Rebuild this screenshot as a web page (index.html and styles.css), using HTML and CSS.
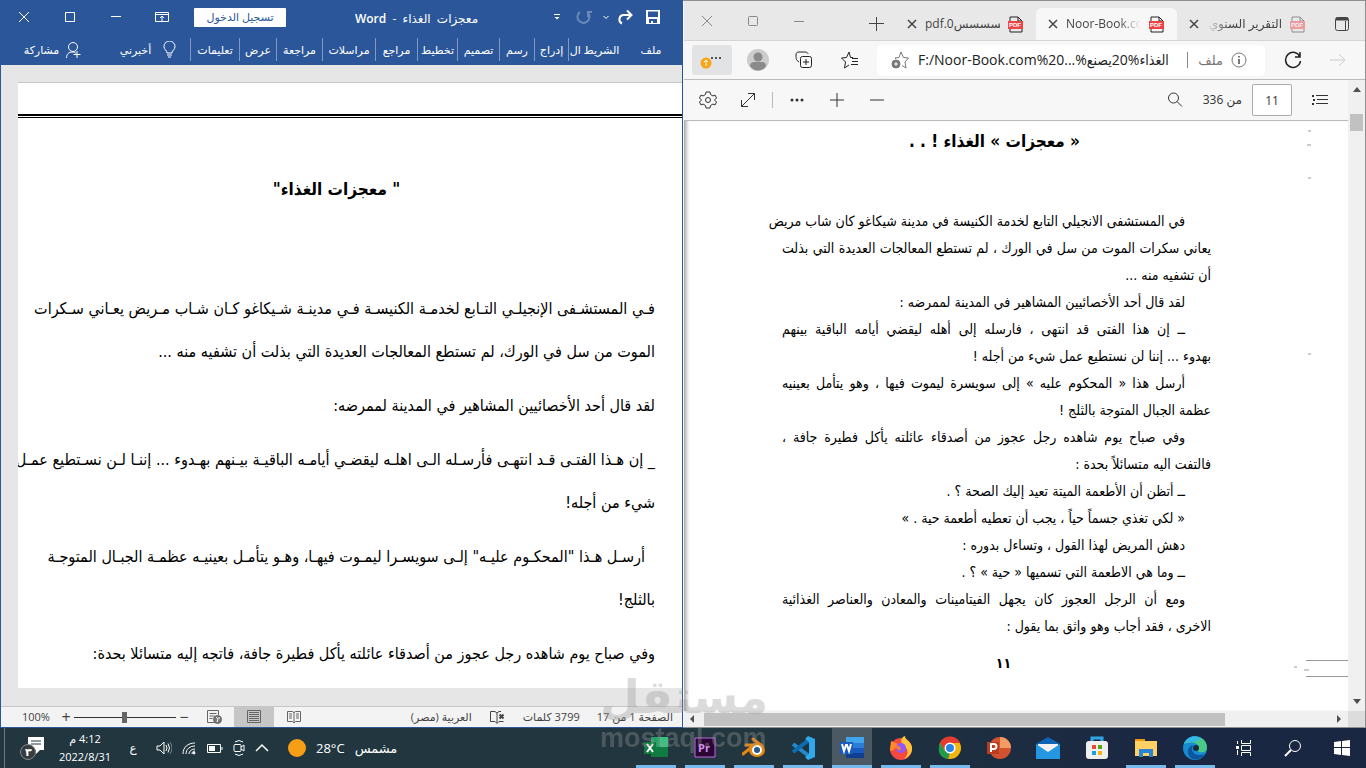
FILE: index.html
```html
<!DOCTYPE html>
<html lang="ar">
<head>
<meta charset="utf-8">
<title>Word - معجزات الغذاء</title>
<link rel="stylesheet" href="styles.css">
</head>
<body>
<main class="desktop">
<section class="word">
  <header class="word-title">
    <div class="controls">
      <button aria-label="إغلاق"><svg width="12" height="12" viewBox="0 0 12 12"><path d="M1 1l10 10M11 1L1 11"/></svg></button>
      <button aria-label="تكبير"><svg width="12" height="12" viewBox="0 0 12 12"><path d="M1.5 1.5h9v9h-9z"/></svg></button>
      <button aria-label="تصغير"><svg width="12" height="12" viewBox="0 0 12 12"><path d="M1 5.500h10"/></svg></button>
      <button aria-label="خيارات عرض الشريط"><svg width="14" height="12" viewBox="0 0 14 12"><path d="M.5 1.500h13v9H.5zM.5 3.500h13M7 10V5M5 7l2-2 2 2"/></svg></button>
    </div>
    <button class="signin">تسجيل الدخول</button>
    <h1 dir="rtl">معجزات&nbsp; الغذاء&nbsp; -&nbsp; <b>Word</b></h1>
    <div class="quick">
      <button aria-label="تخصيص"><svg width="8" height="8" viewBox="0 0 8 8"><path d="M1 1.500h6"/><path class="solid" d="M1.500 4h5L4 6.500z"/></svg></button>
      <button class="dim" aria-label="تكرار"><svg width="16" height="16" viewBox="0 0 16 16"><path d="M4 3a6 6 0 1 0 8 1M12 8V3h4" stroke-width="2"/></svg></button>
      <button aria-label="المزيد"><svg width="8" height="8" viewBox="0 0 8 8"><path d="M1.500 3L4 5.500 6.500 3"/></svg></button>
      <button aria-label="تراجع"><svg width="16" height="16" viewBox="0 0 16 16"><path d="M14 6H6a4.500 4.500 0 0 0-1 8.500M10 1.500L14.500 6 10 10.500" stroke-width="2"/></svg></button>
      <button aria-label="حفظ"><svg width="14" height="14" viewBox="0 0 14 14"><path class="solid" fill-rule="evenodd" d="M0 0h14v14H0zM2 1.500V7h10V1.500zM3 9v4h2v-2h2v2h4V9z"/></svg></button>
    </div>
  </header>
  <nav class="ribbon">
    <button class="share">مشاركة <svg width="18" height="18" viewBox="0 0 18 18"><path d="M1.500 17c0-4 2.500-6 5.500-6 2 0 3 .5 4 1.500"/><circle cx="8" cy="6" r="4.500"/><path d="M12 10v7M8.500 13.500h7"/></svg></button>
    <button class="tell">أخبرني <svg width="13" height="17" viewBox="0 0 13 17"><path d="M4 12c0-3-3-3-3-6.500a5 5 0 0 1 11 0C12 9 9 9 9 12zM4 14h5M5 16h3"/></svg></button>
    <button>تعليمات</button><button>عرض</button><button>مراجعة</button><button>مراسلات</button><button>مراجع</button><button>تخطيط</button><button>تصميم</button><button>رسم</button><button>إدراج</button><button class="home">الشريط ال</button><button class="file">ملف</button>
  </nav>
  <div class="canvas">
    <article class="sheet" dir="rtl">
      <h2>" معجزات الغذاء"</h2>
      <p><span>فـي المستشـفى الإنجيلـي التـابع لخدمـة الكنيسـة فـي مدينـة شـيكاغو كـان شـاب مـريض يعـاني سـكرات</span><span>الموت من سل في الورك، لم تستطع المعالجات العديدة التي بذلت أن تشفيه منه ...</span></p>
      <p><span>لقد قال أحد الأخصائيين المشاهير في المدينة لممرضه:</span></p>
      <p><span>_ إن هـذا الفتـى قـد انتهـى فأرسـله الـى اهلـه ليقضـي أيامـه الباقيـة بيـنهم بهـدوء ... إننـا لـن نسـتطيع عمـل</span><span>شيء من أجله!</span></p>
      <p><span class="inset">أرسـل هـذا "المحكـوم عليـه" إلـى سويسـرا ليمـوت فيهـا، وهـو يتأمـل بعينيـه عظمـة الجبـال المتوجـة</span><span>بالثلج!</span></p>
      <p><span>وفي صباح يوم شاهده رجل عجوز من أصدقاء عائلته يأكل فطيرة جافة، فاتجه إليه متسائلا بحدة:</span></p>
    </article>
  </div>
  <footer class="status">
    <label class="percent" for="zoom">100%</label>
    <button aria-label="تكبير العرض">+</button>
    <input id="zoom" type="range" min="0" max="100" value="49">
    <button aria-label="تصغير العرض">−</button>
    <button class="view" aria-label="تخطيط ويب"><svg width="15" height="14" viewBox="0 0 15 14"><path d="M8 12.500H.5v-12h11V5M2.500 3.500h7M2.500 6h5M2.500 8.500h3"/><circle class="fillgrey" cx="10.500" cy="9.500" r="4"/><path class="pale" d="M9 7l2 2-1 3M12 7v2"/></svg></button>
    <button class="view on" aria-label="تخطيط الطباعة"><svg width="14" height="14" viewBox="0 0 14 14"><path d="M.5.500h13v12H.5zM2 2.500h10M2 4.500h10M2 6.500h10M2 8.500h10M2 10.500h10"/></svg></button>
    <button class="view" aria-label="وضع القراءة"><svg width="14" height="14" viewBox="0 0 14 14"><path d="M.5 1.500h5L7 2.500l1.500-1h5v10h-5L7 13l-1.500-1.500h-5zM7 2v11M2 4h3M2 6h3M2 8h3M9 4h3M9 6h3M9 8h3"/></svg></button>
    <span class="lang" dir="rtl">العربية (مصر)</span>
    <svg class="proof" width="15" height="13" viewBox="0 0 15 13"><path d="M7 2L5 .5H.5v10H5l2 2 2-2h4.500M7 2v10M7 2L9 .5h2"/><path d="M9.500 3.500l4 4M13.500 3.500l-4 4" stroke-width="2"/></svg>
    <span class="words" dir="rtl">3799 كلمات</span>
    <span dir="rtl">الصفحة 1 من 17</span>
  </footer>
</section>

<section class="edge">
  <header class="strip">
    <div class="controls">
      <button aria-label="إغلاق"><svg width="12" height="12" viewBox="0 0 12 12"><path d="M1 1l10 10M11 1L1 11"/></svg></button>
      <button aria-label="تكبير"><svg width="12" height="12" viewBox="0 0 12 12"><rect x="1.500" y="1.500" width="9" height="9" rx="1"/></svg></button>
      <button aria-label="تصغير"><svg width="12" height="12" viewBox="0 0 12 12"><path d="M1 6.500h10"/></svg></button>
    </div>
    <button class="newtab" aria-label="علامة تبويب جديدة"><svg width="16" height="16" viewBox="0 0 16 16"><path d="M7.500 1v14M0 7.500h15"/></svg></button>
    <div class="tab"><button aria-label="إغلاق علامة التبويب"><svg width="10" height="10" viewBox="0 0 10 10"><path class="cross" d="M1 1l8 8M9 1L1 9"/></svg></button><span>pdf.0سسسسس</span><svg class="pdf" width="16" height="17" viewBox="0 0 16 17"><path d="M2 6V1h8l4 4v1M2 12v4h12v-4M10 1v4h4"/><path class="red" d="M0 5h15v8H0z"/><text x="1" y="11">PDF</text></svg></div>
    <div class="tab active"><button aria-label="إغلاق علامة التبويب"><svg width="10" height="10" viewBox="0 0 10 10"><path class="cross" d="M1 1l8 8M9 1L1 9"/></svg></button><span class="fade">Noor-Book.com</span><svg class="pdf" width="16" height="17" viewBox="0 0 16 17"><path d="M2 6V1h8l4 4v1M2 12v4h12v-4M10 1v4h4"/><path class="red" d="M0 5h15v8H0z"/><text x="1" y="11">PDF</text></svg></div>
    <div class="tab"><button aria-label="إغلاق علامة التبويب"><svg width="10" height="10" viewBox="0 0 10 10"><path class="cross" d="M1 1l8 8M9 1L1 9"/></svg></button><span class="fadeleft" dir="rtl">التقرير السنوي.pdf</span><svg class="pdf soft" width="16" height="17" viewBox="0 0 16 17"><path d="M2 6V1h8l4 4v1M2 12v4h12v-4M10 1v4h4"/><path class="red" d="M0 5h15v8H0z"/><text x="1" y="11">PDF</text></svg></div>
    <button class="actions" aria-label="إجراءات علامات التبويب"><svg width="16" height="16" viewBox="0 0 16 16"><rect x="1.500" y="1.500" width="13" height="13" rx="2"/><path d="M2 3h12" stroke-width="3"/><path d="M11.500 5v9"/></svg></button>
  </header>
  <div class="bar">
    <button class="more" aria-label="الإعدادات والمزيد"><svg width="24" height="22" viewBox="0 0 24 22"><g class="solid"><circle cx="12" cy="9" r="1"/><circle cx="16" cy="9" r="1"/><circle cx="20" cy="9" r="1"/></g><circle class="flat" cx="6" cy="14" r="5.500" fill="#f9a51a"/><path d="M6 17v-6M4 13l2-2 2 2" stroke="#fff"/></svg></button>
    <button aria-label="الملف الشخصي"><svg class="flat" width="22" height="22" viewBox="0 0 22 22"><circle cx="11" cy="11" r="11" fill="#ccc"/><circle cx="11" cy="8" r="4.500" fill="#8a8a8a"/><path d="M3 17c0-3 2-4 4-4h8c2 0 4 1 4 4-4 6-12 6-16 0z" fill="#8a8a8a"/></svg></button>
    <button aria-label="المجموعات"><svg width="18" height="18" viewBox="0 0 18 18"><path d="M4 11C1 9 1 8 1 4c0-2 1-3 3-3h6c2 0 3 1 3 2"/><rect x="5.500" y="5.500" width="11" height="11" rx="2"/><path d="M11 8v6M8 11h6"/></svg></button>
    <button aria-label="المفضلة"><svg width="18" height="18" viewBox="0 0 18 18"><path d="M12 6.500H9.500L8 1 5.500 6.500l-5 .5 4 4-1 6L8 14M11 7.500h6M11 10.500h6M10 13.500h7"/></svg></button>
    <div class="address">
      <svg class="grey" width="18" height="18" viewBox="0 0 18 18"><path d="M5 8l-1-1 4-.5L10 1l2.500 5.500 5 .5-3.500 4 1 6-4-2.500"/><circle class="fillgrey" cx="5" cy="13" r="4"/><path class="pale" d="M5 11v4M3 13h4"/></svg>
      <input type="text" aria-label="العنوان" value="F:/Noor-Book.com%20...%يصنع&lrm;20%&lrm;الغذاء">
      <span class="kind">ملف</span>
      <svg class="grey" width="16" height="16" viewBox="0 0 16 16"><circle cx="8" cy="8" r="7"/><path d="M8 7v5M8 4v1.500" stroke-width="2"/></svg>
    </div>
    <button aria-label="تحديث"><svg width="18" height="18" viewBox="0 0 18 18"><path class="cross" d="M16 6A7.500 7.500 0 1 0 16.500 10M16 1v5h-5"/></svg></button>
    <button class="forward" aria-label="للأمام"><svg width="18" height="16" viewBox="0 0 18 16"><path d="M1 8h15M10 2l6 6-6 6"/></svg></button>
  </div>
  <div class="viewer">
    <div class="pane">
      <div class="pdfbar">
        <button aria-label="الإعدادات"><svg width="18" height="18" viewBox="0 0 18 18"><path d="M7 1h4l.5 2.500L14 5l2-1 1.500 3-2 2 2 2-1.500 3-2-1-2.500 1.500L11 17H7l-.5-2.500L4 13l-2 1-1.500-3 2-2-2-2L2 4l2 1 2.500-1.500z"/><circle cx="9" cy="9" r="2.500"/></svg></button>
        <button aria-label="ملاءمة الصفحة"><svg width="16" height="16" viewBox="0 0 16 16"><path d="M1.500 14.500l13-13M8 1.500h6.500V8M1.500 8v6.500H8"/></svg></button>
        <i class="rule"></i>
        <button aria-label="المزيد"><svg class="solid" width="14" height="4" viewBox="0 0 14 4"><circle cx="2" cy="2" r="1.500"/><circle cx="7" cy="2" r="1.500"/><circle cx="12" cy="2" r="1.500"/></svg></button>
        <button aria-label="تكبير"><svg width="14" height="14" viewBox="0 0 14 14"><path d="M7 0v14M0 7h14"/></svg></button>
        <button aria-label="تصغير"><svg width="14" height="14" viewBox="0 0 14 14"><path d="M0 7h14"/></svg></button>
        <button class="find" aria-label="بحث"><svg width="16" height="16" viewBox="0 0 16 16"><circle cx="6.500" cy="6" r="5"/><path d="M10 9.500l5 5"/></svg></button>
        <label for="page" dir="rtl">من 336</label>
        <input id="page" type="text" value="11">
        <button class="toc" aria-label="المحتويات"><svg width="18" height="12" viewBox="0 0 18 12"><path d="M5 1.500h12M6 5.500h11M5 9.500h12"/><path class="solid" d="M1 1h2v2H1zM2 5h2v2H2zM1 9h2v2H1z"/></svg></button>
      </div>
      <article class="scan" dir="rtl">
        <svg class="specks" width="60" height="560" viewBox="0 0 60 560"><path d="M20 10h3M19 24h4M20 57h3M20 233h3M6 546h3M16 549h5" stroke="#999"/><path d="M18 539.500h42M18 555.500h42" stroke="#999"/></svg>
        <h2>« معجزات » الغذاء ! . .</h2>
        <p><span class="full inset">في المستشفى الانجيلي التابع لخدمة الكنيسة في مدينة شيكاغو كان شاب مريض</span><span class="full">يعاني سكرات الموت من سل في الورك ، لم تستطع المعالجات العديدة التي بذلت</span><span>أن تشفيه منه ...</span></p>
        <p><span class="inset">لقد قال أحد الأخصائيين المشاهير في المدينة لممرضه :</span></p>
        <p><span class="full inset">ــ إن هذا الفتى قد انتهى ، فارسله إلى أهله ليقضي أيامه الباقية بينهم</span><span>بهدوء ... إننا لن نستطيع عمل شيء من أجله !</span></p>
        <p><span class="full inset">أرسل هذا « المحكوم عليه » إلى سويسرة ليموت فيها ، وهو يتأمل بعينيه</span><span>عظمة الجبال المتوجة بالثلج !</span></p>
        <p><span class="full inset">وفي صباح يوم شاهده رجل عجوز من أصدقاء عائلته يأكل فطيرة جافة ،</span><span>فالتفت اليه متسائلاً بحدة :</span></p>
        <p><span class="inset">ــ أتظن أن الأطعمة الميتة تعيد إليك الصحة ؟ .</span></p>
        <p><span class="inset">« لكي تغذي جسماً حياً ، يجب أن تعطيه أطعمة حية . »</span></p>
        <p><span class="inset">دهش المريض لهذا القول ، وتساءل بدوره :</span></p>
        <p><span class="inset">ــ وما هي الاطعمة التي تسميها « حية » ؟ .</span></p>
        <p><span class="full inset">ومع أن الرجل العجوز كان يجهل الفيتامينات والمعادن والعناصر الغذائية</span><span>الاخرى ، فقد أجاب وهو واثق بما يقول :</span></p>
        <p class="folio">١١</p>
      </article>
    </div>
    <div class="vscroll"><svg width="10" height="6" viewBox="0 0 10 6"><path d="M1 6h8L5 1z"/></svg><i></i><svg class="end" width="10" height="6" viewBox="0 0 10 6"><path d="M1 0h8L5 5z"/></svg></div>
  </div>
  <div class="hscroll"><svg width="6" height="10" viewBox="0 0 6 10"><path d="M5 1v8L1 5z"/></svg><i></i><svg width="6" height="10" viewBox="0 0 6 10"><path d="M1 1v8l4-4z"/></svg><b></b></div>
</section>
</main>

<footer class="taskbar">
  <button class="notice" aria-label="الإشعارات"><svg width="26" height="26" viewBox="0 0 26 26"><path d="M8 2h16v13h-4l-4 4v-4H8z" fill="#fff"/><path d="M11 6h10M11 9h10" stroke="#21363f"/><circle cx="8" cy="17" r="7.500" fill="#363d40" stroke="#888"/><text x="5" y="21">٣</text></svg></button>
  <div class="clock"><span dir="rtl">4:12 م</span><span>2022/8/31</span></div>
  <span class="ime">ع</span>
  <div class="tray">
    <svg width="16" height="16" viewBox="0 0 16 16"><path d="M1 6h3l4-4v12l-4-4H1zM10 5q2 3 0 6M12 3.500q3 4.500 0 9"/><path d="M14 2q4 6 0 12" stroke="#788"/></svg>
    <svg width="16" height="16" viewBox="0 0 16 16"><path d="M2 14C2 7 7 3 14 3M5 14c0-5 4-8 9-8M8 14c0-3 3-5 6-5M11 14c0-2 1-3 3-3"/><circle cx="13" cy="13" r="1" fill="#fff"/></svg>
    <svg width="16" height="16" viewBox="0 0 16 16"><path d="M.5 4.500h13v8H.5zM15 7v3"/><path class="solid" d="M2 6h6v5H2z"/></svg>
    <svg width="14" height="18" viewBox="0 0 14 18"><rect x="2" y="5.500" width="7" height="7" rx="1"/><path d="M9 8l3-2v6l-3-2M3 3q4-3 8 0M3 15q4 3 8 0"/></svg>
    <svg width="14" height="16" viewBox="0 0 14 16"><path class="cross" d="M1 11l6-6 6 6"/></svg>
  </div>
  <div class="weather"><svg class="flat" width="18" height="18" viewBox="0 0 18 18"><circle cx="9" cy="9" r="9" fill="#f59e16"/></svg><span class="temp">28°C</span><span>مشمس</span></div>
  <div class="apps">
    <button class="run" aria-label="Excel"><svg width="24" height="24" viewBox="0 0 24 24"><path d="M7 1h17v20H7z" fill="#21a366"/><path d="M7 11h17v10H7z" fill="#107c41"/><path d="M16 1h8v10h-8z" fill="#33c481"/><path d="M0 6h12v12H0z" fill="#107c41"/><path d="M3 8l6 8M9 8l-6 8" stroke="#fff" stroke-width="2"/></svg></button>
    <button class="run" aria-label="Premiere"><svg width="24" height="24" viewBox="0 0 24 24"><path d="M2 2h20v19H2z" fill="#2a0634" stroke="#bd6bdc"/><text x="5" y="16">Pr</text></svg></button>
    <button class="run" aria-label="Blender"><svg width="24" height="24" viewBox="0 0 24 24"><path d="M4 9h11M1 18l10-8M11 3l9 7" stroke="#e58714" stroke-width="3" stroke-linecap="round"/><ellipse cx="15" cy="14" rx="8" ry="7" fill="#e58714"/><circle cx="15" cy="14" r="5" fill="#fff"/><circle cx="15" cy="14" r="3" fill="#265787"/></svg></button>
    <button class="run" aria-label="Visual Studio Code"><svg width="24" height="24" viewBox="0 0 24 24"><path d="M2 8l16 12" stroke="#2489ca" stroke-width="4"/><path d="M2 16L18 4" stroke="#0d6cb2" stroke-width="4"/><path d="M17 0l7 3v18l-7 3-3-3 4-3V6l-4-3z" fill="#2fa9ec"/></svg></button>
    <button class="run current" aria-label="Word"><svg width="24" height="24" viewBox="0 0 24 24"><path d="M6 1h18v21H6z" fill="#2b7cd3"/><path d="M6 1h18v6H6z" fill="#41a5ee"/><path d="M6 12h18v5H6z" fill="#185abd"/><path d="M6 17h18v5H6z" fill="#103f91"/><path d="M0 6h13v12H0z" fill="#185abd"/><path d="M2 8l2 7 2-6h1l2 6 2-7" stroke="#fff" stroke-width="2"/></svg></button>
    <button class="run" aria-label="Firefox"><svg width="24" height="24" viewBox="0 0 24 24"><circle cx="12" cy="13" r="11" fill="#f5483f"/><path d="M13 8c-2-4 0-7 3-8 0 5 8 5 7 14-1 5-5 8-8 9 6-6 4-11-2-15z" fill="#ffc53d"/><path d="M2 5l7 3-4 6-4 1z" fill="#ff8a26"/><circle cx="12" cy="12" r="5" fill="#9059ff"/><path d="M5 11c5-3 8 0 6 4z" fill="#f97b37"/></svg></button>
    <button class="run" aria-label="Chrome"><svg width="24" height="24" viewBox="0 0 24 24"><circle cx="12" cy="12" r="11" fill="#f4b60d"/><path d="M2 7C6-2 19-1 22 7H12L7 15z" fill="#e33b2e"/><path d="M2 7l5 8 5 2-2 6C1 22-1 14 2 7z" fill="#229a4a"/><circle cx="12" cy="12" r="5.500" fill="#fff"/><circle cx="12" cy="12" r="4" fill="#2684e8"/></svg></button>
    <button aria-label="PowerPoint"><svg width="24" height="24" viewBox="0 0 24 24"><circle cx="13" cy="12" r="11" fill="#d35230"/><path d="M13 1a11 11 0 0 1 11 11H13z" fill="#f49a63"/><path d="M0 6h12v12H0z" fill="#b83c1d"/><path d="M4 16V8h3a2 2 0 0 1 0 5H4" stroke="#fff" stroke-width="2" fill="none"/></svg></button>
    <button aria-label="البريد"><svg width="24" height="24" viewBox="0 0 24 24"><path d="M0 8l12-7 12 7v14H0z" fill="#0e65b7"/><path d="M2 8h20v10H2z" fill="#f2f2f2"/><path d="M0 8l12 8 12-8v15H0z" fill="#2497e3"/></svg></button>
    <button aria-label="المتجر"><svg width="24" height="24" viewBox="0 0 24 24"><path d="M7 7V2h10v5" stroke="#32a6e4" stroke-width="3"/><rect x="1" y="5" width="22" height="18" rx="3" fill="#efefef"/><path d="M7 9h4v4H7z" fill="#e74b32"/><path d="M13 9h4v4h-4z" fill="#55a51c"/><path d="M7 15h4v4H7z" fill="#209fdf"/><path d="M13 15h4v4h-4z" fill="#f5b312"/></svg></button>
    <button class="run" aria-label="المستكشف"><svg width="24" height="24" viewBox="0 0 24 24"><path d="M1 3h10v4H1z" fill="#e89c12"/><path d="M1 5h22v15H1z" fill="#ffd064"/><path d="M5 13h14v8h-4v-4H9v4H5z" fill="#2785d5"/></svg></button>
    <button class="run" aria-label="Edge"><svg width="24" height="24" viewBox="0 0 24 24"><circle cx="12" cy="12" r="12" fill="#158bd2"/><path d="M1 8C5-2 23-2 24 11c0 5-4 6-8 5-2-1 0-2 0-4 0-5-8-7-15-4z" fill="#4bca87"/><path d="M1 8C5-1 13-1 17 2c-1 5-9 3-16 6z" fill="#35b8e4"/><path d="M10 9c-4 8 4 12 12 9-6 9-18 6-17-3 0-3 2-5 5-6z" fill="#0d559f"/><circle cx="13" cy="12" r="3" fill="#1a2b3f"/></svg></button>
    <button aria-label="عرض المهام"><svg width="18" height="18" viewBox="0 0 18 18"><path d="M2.500 2v3M2.500 11v5M6.500 1v3.500h9V1M6.500 17v-3.500h9V17M6.500 6.500h9v5h-9z"/><path class="solid" d="M1 7h3v3H1z"/></svg></button>
    <button aria-label="بحث"><svg width="18" height="18" viewBox="0 0 18 18"><circle cx="11" cy="7" r="5.500"/><path d="M7 11l-6 6" stroke-width="2"/></svg></button>
    <button aria-label="ابدأ"><svg class="solid" width="16" height="16" viewBox="0 0 16 16"><path d="M0 2l7-1v6H0zM8 1l8-1v7H8zM0 8h7v7l-7-1zM8 8h8v8l-8-1z"/></svg></button>
  </div>
</footer>
<div class="watermark"><span>مستقل</span><span class="domain">mostaql.com</span></div>
</body>
</html>
```
FILE: styles.css
```css
* { box-sizing: border-box; }
body { margin: 0; height: 100vh; display: flex; flex-direction: column; overflow: hidden; font: 11px/16px "Open Sans", "DejaVu Sans", sans-serif; color: #333; }
button { border: 0; padding: 0; background: none; color: inherit; font: inherit; display: flex; align-items: center; justify-content: center; white-space: nowrap; }
svg { fill: none; stroke: currentColor; flex: none; }
h1, h2, p { margin: 0; }
.solid { fill: currentColor; stroke: none; }
.flat { stroke: none; }
.cross { stroke-width: 1.5; }
.desktop { flex: 1; min-height: 0; display: grid; grid-template-columns: 1fr 1fr; }
.word, .edge { min-width: 0; min-height: 0; display: flex; flex-direction: column; }

/* Word window */
.word { border: solid #2b579a; border-width: 0 1px 1px; background: #e6e6e6; }
.word-title { height: 34px; display: flex; align-items: center; background: #2b579a; color: #fff; }
.controls { display: flex; }
.controls button { width: 46px; height: 32px; }
.signin { width: 92px; height: 19px; margin-left: 9px; background: #fff; color: #2b579a; border-radius: 1px; }
.word-title h1 { flex: 1; padding-top: 3px; text-align: center; font-size: 12px; font-weight: 400; }
.word-title b { font-weight: 600; }
.quick { display: grid; grid-template-columns: 20px 34px 10px 28px 28px; height: 34px; padding-right: 15px; }
.dim { opacity: .3; }
.ribbon { height: 31px; display: grid; grid-template-columns: 105fr 84fr 49fr 37fr 46fr 53fr 42fr 40fr 42fr 35fr 34fr 52fr 62fr; background: #2b579a; color: #fff; padding-top: 4px; }
.ribbon button { border-left: 1px solid #7f9bc4; height: 23px; overflow: hidden; }
.ribbon .share, .ribbon .tell, .ribbon .file { border: 0; gap: 6px; }
.ribbon .tell { gap: 12px; }
.canvas { flex: 1; min-height: 0; padding: 17px 0 18px 17px; }
.sheet { height: 100%; overflow: hidden; background: #fff; border-top: 1px solid #c6c6c6; color: #000; font: 16px/43px "DejaVu Sans Condensed", "DejaVu Sans", sans-serif; padding: 31px 27px 0 0; }
.sheet::before { content: ""; display: block; height: 1px; margin-right: -27px; border-top: 2px solid #000; border-bottom: 1px solid #000; }
.sheet h2 { font-size: 17px; line-height: 43px; text-align: center; margin: 50px 0 76px; }
.sheet p { margin-bottom: 11px; }
.sheet span, .scan span { display: block; white-space: nowrap; }
.sheet .inset { padding-right: 10px; }
.status { height: 21px; display: flex; align-items: center; background: #f3f3f3; border-top: 1px solid #c6c6c6; color: #444; padding: 0 9px 0 21px; }
.percent { width: 36px; }
.status button { width: 16px; font-size: 16px; }
#zoom { width: 102px; height: 12px; margin: 0; appearance: none; background: linear-gradient(#333, #333) center / 100% 1px no-repeat; }
#zoom::-webkit-slider-thumb { appearance: none; width: 5px; height: 11px; background: #666; }
.status .view { width: 40px; height: 20px; color: #666; }
.status .view:nth-of-type(3) { margin-left: 2px; }
.status .on { background: #c6c6c6; }
.fillgrey { fill: #777; }
.pale { stroke: #fff; }
.lang { margin-left: auto; }
.proof { margin: 0 18px; }
.words { margin-right: 17px; }

/* Browser window */
.edge { border: solid #8f8f8f; border-width: 1px 1px 1px 0; background: #f7f7f7; padding-left: 1px; }
.strip { height: 40px; display: flex; align-items: flex-start; background: #e8e8e8; color: #444; border-bottom: 1px solid #d5d5d5; }
.strip .controls { height: 40px; color: #888; }
.strip .controls button { height: 40px; }
.newtab { width: 32px; height: 32px; margin: 7px 2px 0 auto; }
.tab { width: 141px; height: 32px; margin-top: 7px; padding: 0 12px; display: flex; align-items: center; gap: 8px; }
.tab span { flex: 1; min-width: 0; overflow: hidden; white-space: nowrap; font-size: 12px; }
.active { background: #f7f7f7; border-radius: 6px 6px 0 0; }
.fade { -webkit-mask-image: linear-gradient(90deg, #000 70%, transparent); }
.fadeleft { -webkit-mask-image: linear-gradient(270deg, #000 70%, transparent); }
.pdf { color: #222; }
.pdf text { fill: #fff; stroke: none; font: bold 6px "Liberation Sans", sans-serif; }
.red { fill: #f04242; stroke: none; }
.soft { opacity: .45; }
.actions { width: 47px; height: 46px; }
.bar { height: 39px; display: flex; align-items: center; padding: 0 12px 0 8px; border-bottom: 1px solid #bbb; color: #222; }
.bar button { width: 46px; height: 30px; }
.bar .more { width: 40px; margin-right: 3px; background: #e2e3e4; border-radius: 3px; }
.address { flex: 1; min-width: 0; height: 31px; margin: 0 5px 0 4px; padding: 0 18px 0 14px; display: flex; align-items: center; background: #fff; border-radius: 5px; }
.address input { flex: 1; min-width: 0; border: 0; padding: 0; margin-left: 9px; background: none; color: #222; font: 14px/20px "Open Sans", "DejaVu Sans Condensed", sans-serif; }
.grey, .kind { color: #777; }
.kind { font-size: 13px; padding: 0 8px 0 10px; border-left: 1px solid #888; }
.bar .forward { color: #ccc; width: 44px; margin-right: -7px; }
.viewer { flex: 1; min-height: 0; display: flex; }
.pane { flex: 1; min-width: 0; display: flex; flex-direction: column; overflow: hidden; }
.pdfbar { height: 41px; flex: none; display: flex; align-items: center; border-bottom: 1px solid #bbb; padding: 0 8px 0 4px; color: #333; }
.pdfbar button { width: 40px; height: 32px; }
.rule { width: 1px; height: 16px; margin: 0 4px; background: #bbb; }
.pdfbar .find { margin-left: auto; }
.pdfbar label { margin: 0 10px 0 8px; font-size: 12px; }
.pdfbar input { width: 40px; height: 32px; border: 1px solid #aaa; border-radius: 2px; padding: 0; background: #fff; text-align: center; font: 12px "Open Sans", sans-serif; color: #333; }
.pdfbar .toc { margin-left: 8px; }
.scan { position: relative; flex: 1; min-height: 0; background: #fff; color: #000; font: 14px/27px "DejaVu Sans Condensed", "DejaVu Sans", sans-serif; padding: 6px 137px 0 98px; box-shadow: inset 5px 0 4px -3px #999; }
.scan h2 { font-size: 17px; line-height: 28px; padding-right: 131px; margin-bottom: 53px; white-space: nowrap; }
.scan .inset { padding-right: 26px; }
.scan .full { text-align: justify; text-align-last: justify; }
.scan .folio { padding-left: 14px; text-align: center; font-weight: bold; margin-top: 10px; }
.specks { position: absolute; right: 0; top: 0; }
.vscroll { width: 17px; display: flex; flex-direction: column; align-items: center; background: #f0f0f0; padding: 6px 2px; }
.vscroll i { width: 13px; height: 17px; margin-top: 22px; background: #c1c1c1; }
.vscroll svg, .hscroll svg { fill: #505050; stroke: none; }
.vscroll .end { margin-top: auto; }
.hscroll { height: 16px; display: flex; align-items: center; background: #f0f0f0; padding-left: 5px; }
.hscroll i { width: 521px; height: 13px; margin: 0 auto 0 9px; background: #c1c1c1; }
.hscroll b { width: 17px; height: 16px; margin-left: 6px; background: #dcdcdc; }

/* Taskbar */
.taskbar { height: 40px; display: flex; align-items: center; background: linear-gradient(90deg, #21363f 55%, #1a2742 85%); color: #fff; padding: 0 4px; }
.notice { width: 56px; height: 40px; border-left: 1px solid #777; }
.notice svg { stroke: none; }
.notice text { fill: #fff; font: bold 11px "DejaVu Sans", sans-serif; }
.clock { width: 50px; display: flex; flex-direction: column; align-items: center; line-height: 18px; }
.ime { width: 46px; text-align: center; font-size: 12px; }
.tray { width: 113px; display: flex; justify-content: space-between; align-items: center; }
.weather { display: flex; align-items: center; margin-left: 19px; font-size: 13px; }
.temp { margin: 0 10px; }
.apps { margin-left: auto; display: flex; gap: 9px; }
.apps button { width: 40px; height: 40px; border: solid transparent; border-width: 3px 0; }
.apps text { fill: #d291f2; font: bold 11px "Open Sans", sans-serif; }
.apps .run { border-bottom-color: #76b9ed; }
.apps .current { border-top-color: #4a5963; background: #4a5963; }
.apps svg[width="24"] { stroke: none; }

.watermark { position: absolute; left: 600px; top: 668px; display: flex; flex-direction: column; color: #999; opacity: .35; font: bold 46px/58px "DejaVu Sans", sans-serif; pointer-events: none; }
.domain { font: bold 27px/24px "Liberation Sans", sans-serif; }
```
